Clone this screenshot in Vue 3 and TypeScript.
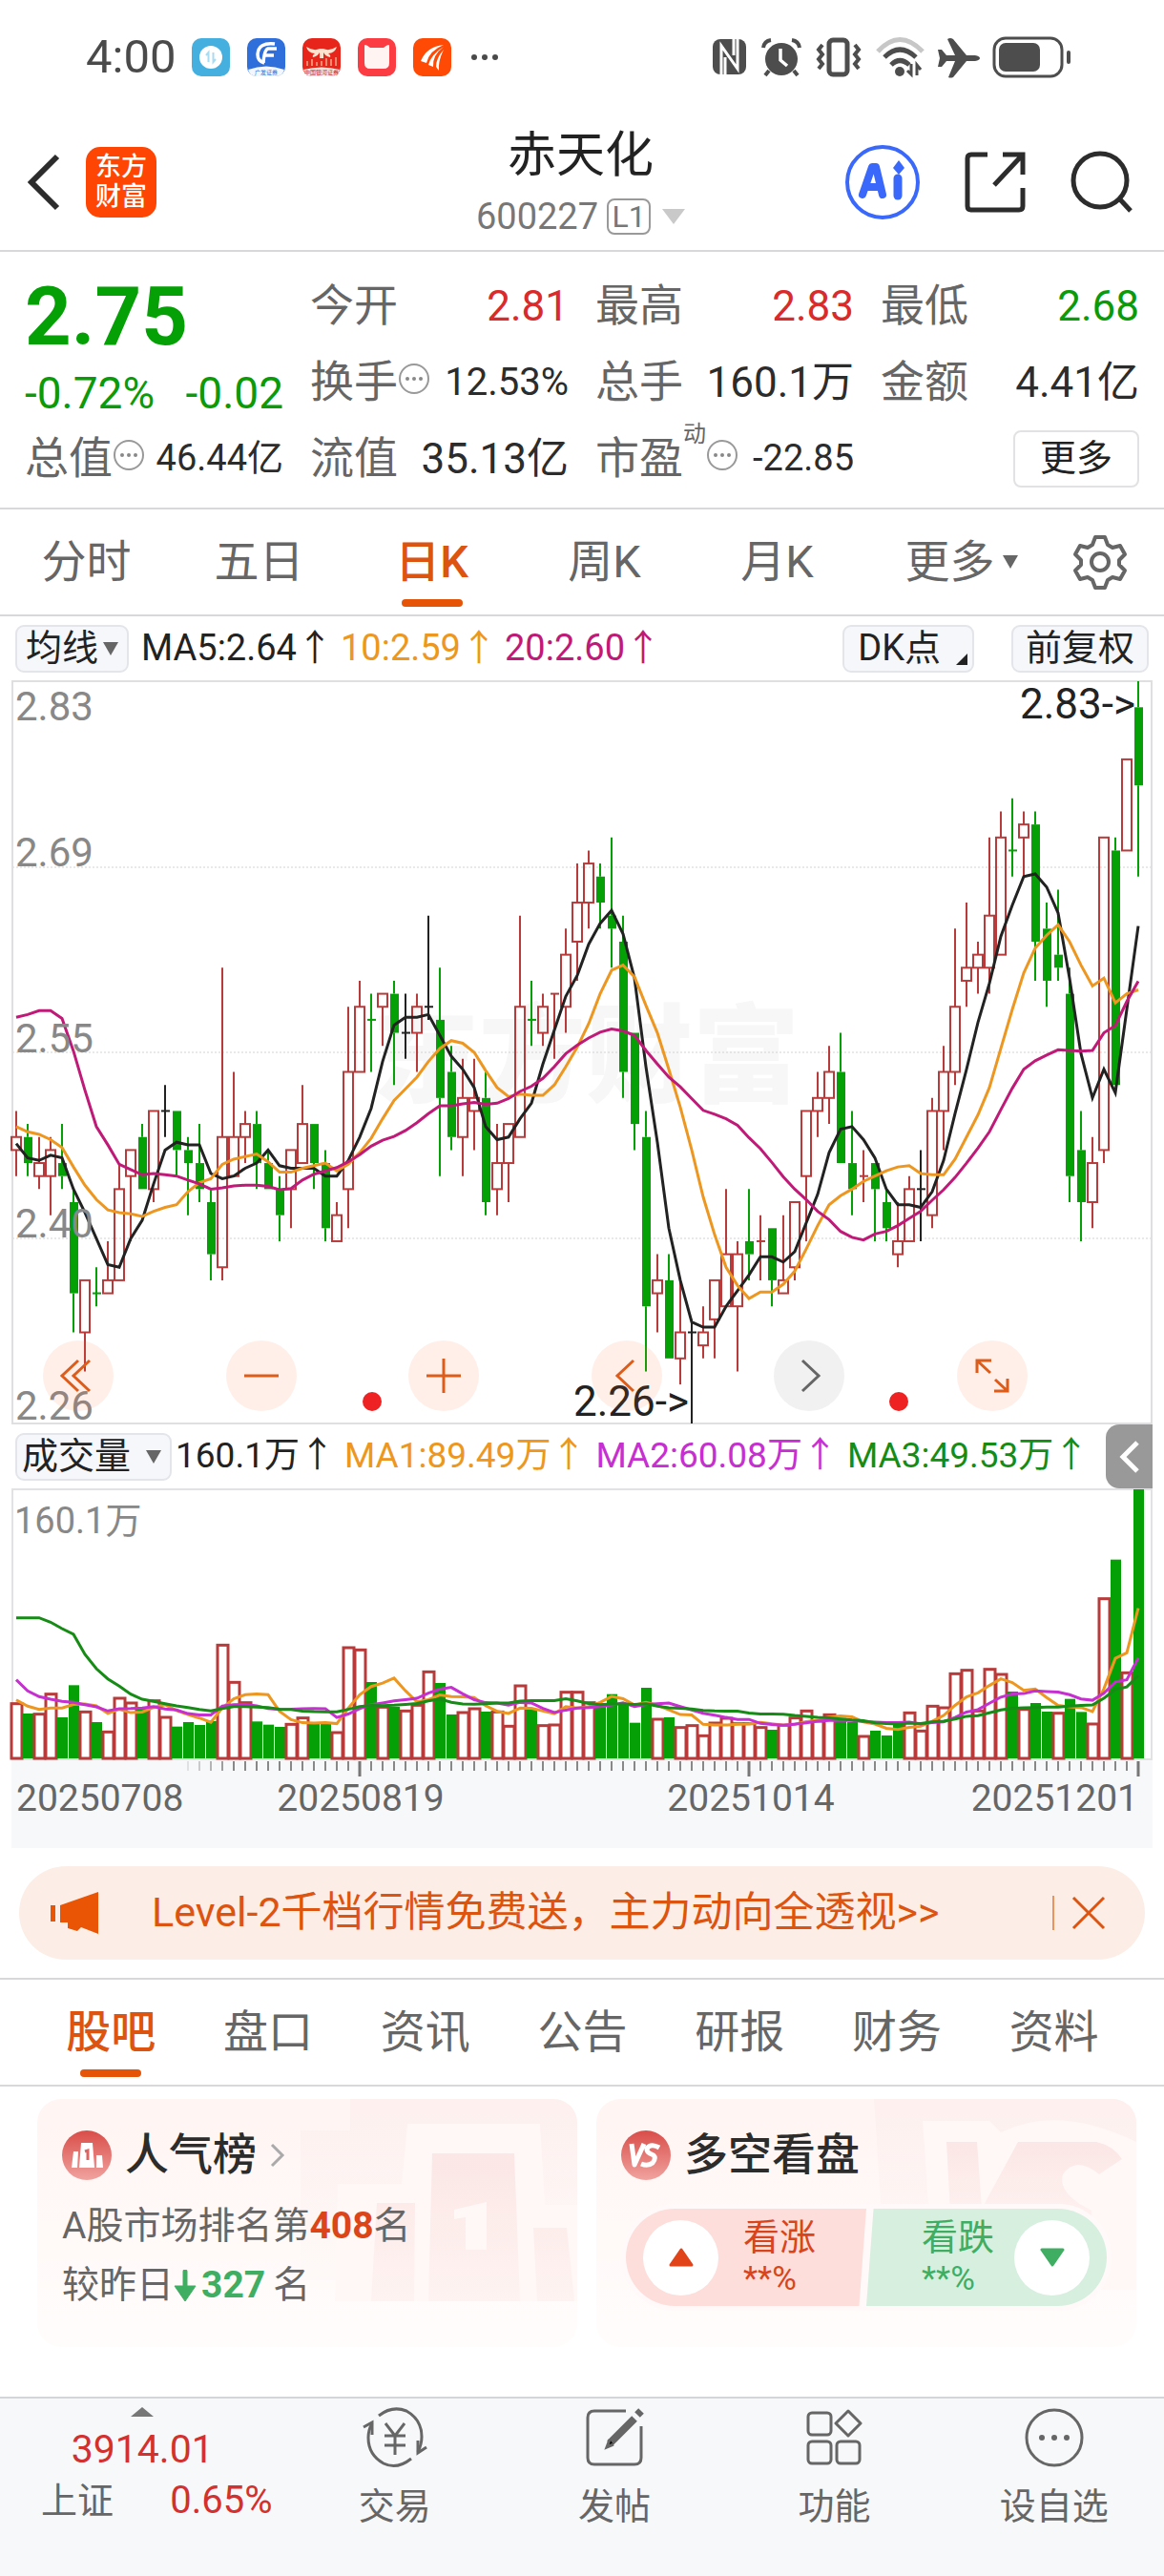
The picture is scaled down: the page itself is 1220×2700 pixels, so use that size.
<script setup lang="ts">
import { computed, ref } from 'vue'

type Kind = 'r' | 'g' | 'k'
interface Candle { kind: Kind; high: number; top: number; bottom: number; low: number; close: number }

// Every level is stored in cents below the 2.83 session peak: kind high top bottom low
const raw = `r 33 35 36 38|g 34 35 37 38|r 35 37 38 39|r 35 36 38 41|g 34 37 38 39|g 39 40 47 50|r 46 46 50 53|g 45 47 47 48|r 43 46 47 47|r 37 39 46 46
|r 36 36 38 43|g 34 35 39 39|r 33 33 39 40|k 31 33 33 35|g 33 33 36 38|g 35 36 37 41|g 34 37 39 40|g 39 40 44 46|r 22 35 45 46|r 30 35 38 38
|r 33 34 35 37|g 33 34 37 39|g 36 37 39 39|g 38 39 41 43|r 36 36 39 42|r 31 34 37 37|g 34 34 37 39|g 36 37 42 43|r 40 41 43 43|r 25 30 39 42
|r 23 25 30 30|g 24 26 26 30|r 24 24 25 28|g 23 24 27 31|k 24 27 27 29|r 24 25 27 30|k 18 25 25 26|g 22 26 32 38|g 28 30 35 36|r 29 32 35 38
|r 29 32 33 36|g 30 32 40 41|r 34 37 39 41|r 34 34 37 40|r 18 25 35 35|g 23 26 26 28|r 24 25 27 28|r 24 24 24 29|r 19 21 25 27|r 14 17 20 23
|r 13 14 17 19|g 14 15 17 19|g 12 18 19 22|g 18 20 30 32|g 27 27 34 36|g 33 35 48 53|r 44 46 47 50|g 44 46 52 52|r 46 50 52 54|k 49 50 50 57
|r 48 50 51 52|r 46 46 49 52|r 39 44 48 48|r 43 44 48 53|g 39 43 44 46|r 41 43 43 46|g 42 42 46 48|r 41 46 47 47|r 40 40 45 46|r 33 33 38 43
|r 30 32 33 35|r 28 30 32 34|g 27 30 37 37|g 33 37 39 41|r 36 38 38 40|g 37 37 39 43|g 39 40 42 43|r 40 43 44 45|r 38 39 43 43|k 36 39 39 43
|r 32 33 41 42|r 28 30 33 36|r 19 25 30 31|r 17 22 23 25|r 20 21 22 24|r 12 18 22 24|r 10 12 21 21|g 9 13 13 15|r 10 11 12 15|g 10 11 20 23
|g 17 19 23 25|g 16 21 22 23|g 22 24 38 40|g 33 36 40 43|r 35 37 40 42|r 12 12 36 37|g 12 13 31 31|r 6 6 13 13|g 0 2 8 15`

const candles: Candle[] = raw.split('|').map((row) => {
  const [kind, ...n] = row.trim().split(' ')
  const [high, top, bottom, low] = n.map(Number)
  return { kind: kind as Kind, high, top, bottom, low, close: kind === 'g' ? bottom : top }
})

const volumes = [
  175, 141, 142, 205, 129, 230, 149, 114, 86, 192, 177, 160, 184, 132, 100, 114, 105, 117, 359, 242,
  178, 116, 106, 99, 110, 130, 111, 111, 84, 351, 344, 240, 164, 162, 152, 170, 275, 237, 138, 147,
  159, 147, 149, 104, 231, 155, 106, 108, 211, 211, 178, 172, 202, 174, 112, 222, 126, 129, 100, 106,
  74, 114, 129, 112, 112, 100, 90, 107, 130, 152, 120, 140, 127, 114, 72, 87, 72, 110, 146, 89,
  167, 162, 269, 280, 152, 283, 267, 210, 157, 174, 147, 145, 187, 146, 111, 505, 625, 272, 846,
]

const cx = (i: number) => 5 + i * 12
const py = (k: number) => 1 + k * 13.65
const vy = (v: number) => 283 - v / 3

// Moving average; `lead` holds the points that depend on days before the window
function average(values: number[], size: number, lead: number[]): number[] {
  return values.map((_, i) =>
    i < lead.length ? lead[i] : values.slice(i - size + 1, i + 1).reduce((a, b) => a + b, 0) / size,
  )
}
const line = (values: number[], y: (v: number) => number) =>
  values.map((v, i) => `${cx(i)},${y(v).toFixed(1)}`).join(' ')

const closes = candles.map((c) => c.close)
const priceLines = [
  { color: '#222', points: line(average(closes, 5, [35.5, 36.6, 36.8, 36.4]), py) },
  { color: '#ed9720', points: line(average(closes, 10, [34.2, 34.6, 34.8, 35.2, 35.8, 37.3, 38.7, 39.8, 40.6]), py) },
  {
    color: '#c01a78',
    points: line(average(closes, 20, [25.8, 25.6, 25.3, 25.3, 25.9, 28.4, 31.4, 34.2, 35.6, 37.1, 37.5, 37.9, 37.8, 37.9, 38, 38.3, 38.6, 39, 38.9]), py),
  },
]
const volumeLines = [
  { color: '#ed9720', points: line(average(volumes, 5, [184, 164, 154, 158]), vy) },
  { color: '#c62fd0', points: line(average(volumes, 10, [247, 212, 194, 186, 179, 176, 169, 162, 149]), vy) },
  {
    color: '#168c16',
    points: line(average(volumes, 20, [442, 442, 442, 428, 408, 390, 327, 282, 250, 227, 202, 186, 179, 172, 165, 160, 154, 149, 157]), vy),
  },
]
const bars = volumes.map((v, i) => ({ x: cx(i), v, up: i === 0 || closes[i] <= closes[i - 1] }))
const ticks = Array.from({ length: 84 }, (_, n) => n + 15)
const majorTicks = [30, 64, 98]
const tone: Record<Kind, string> = { r: '#b83a3a', g: '#05a005', k: '#222' }

const axis = [
  { label: '2.83', y: 42 },
  { label: '2.69', y: 195 },
  { label: '2.55', y: 390 },
  { label: '2.40', y: 584 },
  { label: '2.26', y: 775 },
]

const periods = ['分时', '五日', '日K', '周K', '月K', '更多']
const period = ref('日K')
const sections = ['股吧', '盘口', '资讯', '公告', '研报', '财务', '资料']
const section = ref('股吧')
const bannerOpen = ref(true)

const stats = computed(() => [
  { label: '今开', value: '2.81', tone: 'up' },
  { label: '最高', value: '2.83', tone: 'up' },
  { label: '最低', value: '2.68', tone: 'down' },
  { label: '换手', value: '12.53%', info: true, size: 'mid' },
  { label: '总手', value: '160.1万' },
  { label: '金额', value: '4.41亿' },
])
</script>

<template>
  <div class="page">
    <div class="status">
      <span class="clock">4:00</span>
      <div class="apps">
        <svg viewBox="0 0 40 40"><rect width="40" height="40" rx="10" fill="#45b0e0" /><circle cx="20" cy="20" r="12" fill="#fff" /><path d="M17.500 25V15l-2.500 3M22.500 15v10l2.500-3" fill="none" stroke="#a9dcf2" stroke-width="2" /></svg>
        <svg viewBox="0 0 40 40"><rect width="40" height="40" rx="10" fill="#2f6fdc" /><path d="M1 33Q20 26 39 33Q37 40 30 40H10Q3 40 1 33" fill="#f3f6fc" /><path d="M29 6Q12 4 11 17Q11 24 18 26M31 11H22Q18 12 17 26M18 18h10" fill="none" stroke="#fff" stroke-width="3.500" /><text x="20" y="38" text-anchor="middle" class="tiny" fill="#2f6fdc">广发证券</text></svg>
        <svg viewBox="0 0 40 40"><rect width="40" height="40" rx="10" fill="#e8251b" /><path d="M1 33Q20 28 39 33Q37 40 30 40H10Q3 40 1 33" fill="#fbe9e2" /><path d="M4 9q8 5 14 2h4q6 3 14-2q-2 7-9 7q3 2 2 4q-5-1-7-5v6h-4v-6q-2 4-7 5q-1-2 2-4Q6 16 4 9" fill="#fbe3cf" /><path d="M5 29v-5M10 29v-7M15 29v-4M20 29v-5M25 29v-8M30 29v-7M35 29v-9" stroke="#f28a70" stroke-width="2" /><text x="20" y="38" text-anchor="middle" class="tiny" fill="#c3271e">中国银河证券</text></svg>
        <svg viewBox="0 0 40 40"><rect width="40" height="40" rx="10" fill="#fb3c42" /><path d="M7 8q0-3 6 2h14q6-5 6-2v18q0 6-6 6H13q-6 0-6-6z" fill="#fff4f2" /></svg>
        <svg viewBox="0 0 40 40"><rect width="40" height="40" rx="10" fill="#fe4a05" /><path d="M32 7Q14 9 8 24l6 2Q17 13 32 7M32 9Q19 17 16 28l5 2Q20 18 32 9M32 12q-8 9-8 18l3 4q-1-10 5-22" fill="#fff" /></svg>
      </div>
      <svg class="dots" viewBox="0 0 30 8"><circle cx="4" cy="4" r="3" /><circle cx="15" cy="4" r="3" /><circle cx="26" cy="4" r="3" /></svg>
      <svg class="signals" viewBox="0 0 378 44">
        <rect x="1" y="3" width="35" height="37" rx="8" fill="#4d4d4d" />
        <path d="M10 40V10l17 24V3M14 40V22M23 3v17" fill="none" stroke="#fff" stroke-width="3" />
        <circle cx="73" cy="24" r="17" fill="#4d4d4d" /><path d="M72 13v12l7 6" fill="none" stroke="#fff" stroke-width="3.500" /><path d="M54 12q1-7 8-8M92 12q-1-7-8-8M60 36l-4 5M86 36l4 5" fill="none" stroke="#4d4d4d" stroke-width="4" />
        <rect x="123" y="4" width="19" height="36" rx="4" fill="none" stroke="#4d4d4d" stroke-width="5" /><path d="M116 9l-4 5 4 5-4 5 4 5-4 5M150 9l4 5-4 5 4 5-4 5 4 5" fill="none" stroke="#4d4d4d" stroke-width="4" />
        <path d="M174 16Q197-9 221 16" fill="none" stroke="#c7c7c7" stroke-width="5" /><path d="M181 22q16-16 33 0M188 30q9-9 19 0" fill="none" stroke="#4d4d4d" stroke-width="5" /><circle cx="197" cy="37" r="5" fill="#4d4d4d" /><path d="M209 29v11l-4-4M215 41v-11l4 5" fill="none" stroke="#4d4d4d" stroke-width="3" />
        <path d="M237 14h4l5 6h9L247 3q3-2 6 0l14 17h9q5 1 5 3q0 2-5 3h-9L253 43q-3 1-5 0l7-17h-9l-5 6h-4l2-9z" fill="#4d4d4d" />
        <rect x="296" y="2" width="71" height="40" rx="12" fill="none" stroke="#4d4d4d" stroke-width="3" /><rect x="301" y="7" width="43" height="30" rx="7" fill="#4d4d4d" /><path d="M374 17v10" stroke="#4d4d4d" stroke-width="4" stroke-linecap="round" />
      </svg>
    </div>

    <header class="head">
      <div class="head-left">
        <button class="plain" aria-label="返回"><svg width="36" height="62" viewBox="0 0 36 62"><path d="M32 4L5 31l27 27" fill="none" stroke="#2c2c2c" stroke-width="6" /></svg></button>
        <div class="brand"><span>东方</span><span>财富</span></div>
      </div>
      <div class="title">
        <h1>赤天化</h1>
        <div class="code"><span>600227</span><span class="level">L1</span><svg width="24" height="16" viewBox="0 0 24 16"><path d="M0 0h24L12 16z" fill="#c9c9c9" /></svg></div>
      </div>
      <div class="head-right">
        <button class="plain" aria-label="AI"><svg width="80" height="80" viewBox="0 0 80 80"><circle cx="40" cy="40" r="37" fill="none" stroke="#3a68fb" stroke-width="4" /><path d="M19 53l10-29h4l7 29M23 45h15" fill="none" stroke="#3a68fb" stroke-width="8" stroke-linejoin="round" stroke-linecap="round" /><path d="M56 36v18" stroke="#3a68fb" stroke-width="9" stroke-linecap="round" /><path d="M57 17l6 8-6 7-6-7z" fill="#3a68fb" /></svg></button>
        <button class="plain" aria-label="分享"><svg width="66" height="66" viewBox="0 0 66 66"><path d="M25 4H8q-4 0-4 4v50q0 4 4 4h50q4 0 4-4V39M41 4h21v21M62 4L32 36" fill="none" stroke="#2c2c2c" stroke-width="5" /></svg></button>
        <button class="plain" aria-label="搜索"><svg width="68" height="66" viewBox="0 0 68 66"><circle cx="32" cy="31" r="28" fill="none" stroke="#2c2c2c" stroke-width="5" /><path d="M52 50l12 13" stroke="#2c2c2c" stroke-width="5" /></svg></button>
      </div>
    </header>

    <section class="quote">
      <div class="price">
        <strong>2.75</strong>
        <div class="change"><span>-0.72%</span><span>-0.02</span></div>
      </div>
      <div v-for="s in stats" :key="s.label" class="stat">
        <span>{{ s.label }}</span>
        <svg v-if="s.info" class="info" viewBox="0 0 34 34"><circle cx="17" cy="17" r="15" fill="none" stroke="#999" stroke-width="2" /><g fill="#888"><circle cx="10" cy="17" r="2" /><circle cx="17" cy="17" r="2" /><circle cx="24" cy="17" r="2" /></g></svg>
        <b :class="[s.tone, s.size]">{{ s.value }}</b>
      </div>
      <div class="stat">
        <span>总值</span>
        <svg class="info" viewBox="0 0 34 34"><circle cx="17" cy="17" r="15" fill="none" stroke="#999" stroke-width="2" /><g fill="#888"><circle cx="10" cy="17" r="2" /><circle cx="17" cy="17" r="2" /><circle cx="24" cy="17" r="2" /></g></svg>
        <b class="small">46.44亿</b>
      </div>
      <div class="stat"><span>流值</span><b>35.13亿</b></div>
      <div class="stat">
        <span>市盈</span><sup>动</sup>
        <svg class="info" viewBox="0 0 34 34"><circle cx="17" cy="17" r="15" fill="none" stroke="#999" stroke-width="2" /><g fill="#888"><circle cx="10" cy="17" r="2" /><circle cx="17" cy="17" r="2" /><circle cx="24" cy="17" r="2" /></g></svg>
        <b class="small">-22.85</b>
      </div>
      <div class="stat end"><button class="more">更多</button></div>
    </section>

    <nav class="periods">
      <button v-for="p in periods" :key="p" class="tab" :class="{ on: p === period, menu: p === '更多' }" @click="period = p">
        {{ p }}<svg v-if="p === '更多'" class="caret" viewBox="0 0 16 14"><path d="M0 0h16L8 14z" fill="#666" /></svg>
      </button>
      <button class="plain gear" aria-label="设置">
        <svg width="58" height="58" viewBox="0 0 58 58"><path d="M24 3h10l3 8 5 3 8-2 5 9-6 6v5l6 6-5 9-8-2-5 3-3 8H24l-3-8-5-3-8 2-5-9 6-6v-5l-6-6 5-9 8 2 5-3z" fill="none" stroke="#666" stroke-width="4" stroke-linejoin="round" /><circle cx="29" cy="29" r="9" fill="none" stroke="#666" stroke-width="4" /></svg>
      </button>
    </nav>

    <div class="bar">
      <button class="chip">均线<svg class="caret" viewBox="0 0 16 14"><path d="M0 0h16L8 14z" fill="#666" /></svg></button>
      <div class="legend"><span>MA5:2.64↑</span><span class="orange">10:2.59↑</span><span class="pink">20:2.60↑</span></div>
      <div class="chips">
        <button class="chip dk">DK点<svg class="corner" viewBox="0 0 12 12"><path d="M12 0v12H0z" fill="#222" /></svg></button>
        <button class="chip">前复权</button>
      </div>
    </div>

    <div class="chart">
      <svg viewBox="0 0 1196 780" role="img" aria-label="日K线图">
        <g class="mark" fill="#f7f7f7"><text x="378" y="434">东方财富</text></g>
        <path d="M1 196H1196M1 390H1196M1 585H1196" stroke="#d2d2d2" stroke-dasharray="2 2" />
        <rect x="1" y="1" width="1194" height="778" fill="none" stroke="#dfdfe1" stroke-width="2" />
        <g v-for="(c, i) in candles" :key="i" :stroke="tone[c.kind]">
          <path :d="`M${cx(i)} ${py(c.high)}V${py(c.top)}M${cx(i)} ${py(c.bottom)}V${py(c.low)}`" stroke-width="2" />
          <path v-if="c.top === c.bottom" :d="`M${cx(i) - 4} ${py(c.top)}h9`" stroke-width="2" />
          <rect v-else-if="c.kind === 'r'" :x="cx(i) - 5" :y="py(c.top)" width="10" :height="py(c.bottom) - py(c.top)" fill="none" stroke-width="2" />
          <rect v-else :x="cx(i) - 4" :y="py(c.top)" width="9" :height="py(c.bottom) - py(c.top)" :fill="tone.g" stroke="none" />
        </g>
        <polyline v-for="l in priceLines" :key="l.color" :points="l.points" fill="none" :stroke="l.color" stroke-width="3" />
        <g class="axis"><text v-for="a in axis" :key="a.label" x="4" :y="a.y">{{ a.label }}</text></g>
        <circle cx="378" cy="756" r="10" fill="#ee2222" /><circle cx="930" cy="756" r="10" fill="#ee2222" />
        <text class="peak" x="1178" y="40" text-anchor="end">2.83-&gt;</text>
        <text class="peak" x="710" y="771" text-anchor="end">2.26-&gt;</text>
      </svg>
      <div class="controls">
        <button aria-label="最早"><svg viewBox="0 0 74 74"><path d="M37 21L20 37l17 16M49 21L32 37l17 16" /></svg></button>
        <button aria-label="缩小"><svg viewBox="0 0 74 74"><path d="M19 37h36" /></svg></button>
        <button aria-label="放大"><svg viewBox="0 0 74 74"><path d="M19 37h36M37 19v36" /></svg></button>
        <button aria-label="左移"><svg viewBox="0 0 74 74"><path d="M44 21L27 37l17 16" /></svg></button>
        <button aria-label="右移" class="off"><svg viewBox="0 0 74 74"><path d="M30 21l17 16-17 16" /></svg></button>
        <button aria-label="全屏"><svg viewBox="0 0 74 74"><path d="M21 34V21h15M21 21l14 13M53 40v13H39M53 53L40 41" /></svg></button>
      </div>
    </div>

    <div class="bar volume-bar">
      <button class="chip wide">成交量<svg class="caret" viewBox="0 0 16 14"><path d="M0 0h16L8 14z" fill="#666" /></svg></button>
      <div class="legend tight"><span>160.1万↑</span><span class="orange">MA1:89.49万↑</span><span class="violet">MA2:60.08万↑</span><span class="green">MA3:49.53万↑</span></div>
      <button class="drawer" aria-label="展开"><svg width="22" height="36" viewBox="0 0 22 36"><path d="M19 3L4 18l15 15" fill="none" stroke="#fff" stroke-width="5" /></svg></button>
    </div>

    <div class="chart">
      <svg viewBox="0 0 1196 377" role="img" aria-label="成交量图">
        <rect y="285" width="1196" height="92" fill="#f7f8fa" />
        <rect x="1" y="1" width="1194" height="283" fill="none" stroke="#e2e2e4" stroke-width="2" />
        <template v-for="b in bars" :key="b.x">
          <rect v-if="b.up" :x="b.x - 5" :y="vy(b.v) + 1" width="11" :height="b.v / 3 - 1" fill="#fff" stroke="#b83a3a" stroke-width="3" />
          <rect v-else :x="b.x - 5" :y="vy(b.v)" width="11" :height="b.v / 3" fill="#05a005" />
        </template>
        <polyline v-for="l in volumeLines" :key="l.color" :points="l.points" fill="none" :stroke="l.color" stroke-width="3" />
        <path v-for="t in ticks" :key="t" :d="`M${cx(t)} 286v10`" stroke="#888" :opacity="Math.min(1, (t - 14) / 5)" stroke-width="2" />
        <path v-for="t in majorTicks" :key="t" :d="`M${cx(t)} 286v16`" stroke="#777" stroke-width="3" />
        <text class="vol" x="3" y="47">160.1万</text>
        <g class="dates"><text x="5" y="338">20250708</text><text x="366" y="338" text-anchor="middle">20250819</text><text x="775" y="338" text-anchor="middle">20251014</text><text x="1181" y="338" text-anchor="end">20251201</text></g>
      </svg>
    </div>

    <div v-if="bannerOpen" class="banner">
      <svg width="50" height="44" viewBox="0 0 50 44"><path d="M0 14h5v17H0zM10 14L50 0v44l-18-7-4 4-10-3V32H10z" fill="#e95505" /></svg>
      <a href="#">Level-2千档行情免费送，主力动向全透视&gt;&gt;</a>
      <button class="plain close" aria-label="关闭" @click="bannerOpen = false"><svg width="36" height="36" viewBox="0 0 36 36"><path d="M2 2l32 32M34 2L2 34" stroke="#dd5410" stroke-width="3" /></svg></button>
    </div>

    <nav class="sections">
      <button v-for="s in sections" :key="s" class="tab" :class="{ on: s === section }" @click="section = s">{{ s }}</button>
    </nav>

    <div class="cards">
      <article class="card">
        <svg class="art" viewBox="0 0 566 260" preserveAspectRatio="xMaxYMin slice">
          <defs>
            <linearGradient id="halo" x1="0" y1="0" x2="0" y2="1"><stop offset="0" stop-color="#fdf0ee" /><stop offset="1" stop-color="#fef9f8" /></linearGradient>
            <linearGradient id="podium" x1="0" y1="0" x2="0" y2="1"><stop offset="0" stop-color="#fbe7e5" /><stop offset="1" stop-color="#fef3f1" /></linearGradient>
          </defs>
          <path d="M276 190V33h52V0h238v190z" fill="url(#halo)" />
          <path d="M312 212l3-123h67l6-63h139l5 85h34v101z" fill="#fff8f6" />
          <path d="M356 109h40l-1 103h-45zM414 57h86l6 155h-96zM520 135h35l8 77h-39z" fill="url(#podium)" />
          <path d="M437 116l34-8v50h-22v-34l-12 2z" fill="#fff8f6" />
        </svg>
        <div class="card-title">
          <svg width="52" height="52" viewBox="0 0 52 52"><defs><linearGradient id="badge" x1="0" y1="0" x2="0" y2="1"><stop offset="0" stop-color="#d94d49" /><stop offset="1" stop-color="#f0a39f" /></linearGradient></defs><circle cx="26" cy="26" r="26" fill="url(#badge)" /><path d="M12 22h5l-1 17h-6zM20 13h12l2 26H18zM36 26h6l1 13h-7z" fill="#fff" /><path d="M24 22l3-1v10" fill="none" stroke="#dd6461" stroke-width="3" /></svg>
          <h2>人气榜</h2>
          <svg width="16" height="26" viewBox="0 0 16 26"><path d="M2 2l11 11L2 24" fill="none" stroke="#aaa" stroke-width="3" /></svg>
        </div>
        <p>A股市场排名第<b class="rank">408</b>名</p>
        <p>较昨日<svg class="fall" viewBox="0 0 24 34"><path d="M12 2v20" stroke="#3fae62" stroke-width="5" stroke-linecap="round" /><path d="M1 17h22L12 33z" fill="#3fae62" stroke="#3fae62" stroke-linejoin="round" /></svg><b class="drop">327</b>名</p>
      </article>
      <article class="card">
        <svg class="art" viewBox="0 0 566 260" preserveAspectRatio="xMaxYMin slice">
          <path d="M291 0h275v200H304z" fill="url(#halo)" />
          <path d="M342 23h70l12 12q60-30 142 10v155H354z" fill="#fff8f6" />
          <path d="M367 45h32l5 70 38-70h82q18 4 27 18l-24 16q-24-20-38 0-6 20 30 38v20H412l28-42-14 42h-54z" fill="url(#podium)" />
        </svg>
        <div class="card-title">
          <svg width="52" height="52" viewBox="0 0 52 52"><circle cx="26" cy="26" r="26" fill="url(#badge)" /><path d="M11 14l3 22 10-22M40 18q-9-5-13 1-1 4 7 7 3 3-1 8-5 4-12 1" fill="none" stroke="#fff" stroke-width="5" stroke-linejoin="round" /></svg>
          <h2>多空看盘</h2>
        </div>
        <div class="votes">
          <button class="vote bull"><i><svg width="26" height="20" viewBox="0 0 26 20"><path d="M13 2l11 16H2z" fill="#e04418" stroke="#e04418" stroke-width="3" stroke-linejoin="round" /></svg></i><span>看涨<br /><em>**%</em></span></button>
          <button class="vote bear"><span>看跌<br /><em>**%</em></span><i><svg width="26" height="20" viewBox="0 0 26 20"><path d="M13 18L2 2h22z" fill="#3fae62" stroke="#3fae62" stroke-width="3" stroke-linejoin="round" /></svg></i></button>
        </div>
      </article>
    </div>

    <footer class="dock">
      <div class="index">
        <svg width="24" height="10" viewBox="0 0 24 10"><path d="M12 0l12 10H0z" fill="#777" /></svg>
        <b>3914.01</b>
        <div><span>上证</span><em>0.65%</em></div>
      </div>
      <button class="dock-item"><svg viewBox="0 0 72 64"><path d="M19 9Q33-2 48 4 64 13 64 31q0 8-4 16M53 54Q38 66 24 59 8 50 8 32q0-8 4-15" fill="none" /><path d="M69 42l-9 6V35M3 21l9-5v13" fill="none" /><path d="M26 17l10 13 10-13M36 30v20M25 30h22M25 40h22" fill="none" /></svg>交易</button>
      <button class="dock-item"><svg viewBox="0 0 72 64"><path d="M48 4H15q-7 0-7 7v42q0 7 7 7h42q7 0 7-7V20" fill="none" /><path d="M57 12L31 38" stroke-width="8" /><path d="M60 8l4-4" stroke-width="8" /><path d="M31 34l-3 8 7-3" /></svg>发帖</button>
      <button class="dock-item"><svg viewBox="0 0 72 64"><rect x="9" y="6" width="24" height="23" rx="4" fill="none" /><rect x="9" y="36" width="24" height="23" rx="4" fill="none" /><rect x="39" y="36" width="24" height="23" rx="4" fill="none" /><path d="M51 4l13 13-13 13-13-13z" fill="none" stroke-linejoin="round" /></svg>功能</button>
      <button class="dock-item"><svg viewBox="0 0 72 64"><circle cx="36" cy="32" r="29" fill="none" /><g fill="#666" stroke="none"><circle cx="23" cy="32" r="3" /><circle cx="36" cy="32" r="3" /><circle cx="49" cy="32" r="3" /></g></svg>设自选</button>
    </footer>
  </div>
</template>

<style>
body { background: #fff; }
</style>

<style scoped>
* { box-sizing: border-box; }
.page { font-family: Roboto, "Noto Sans CJK SC", sans-serif; color: #222; font-size: 38px; line-height: 1.2; }
svg { display: block; flex: none; }
button { font: inherit; color: inherit; background: none; border: 0; padding: 0; margin: 0; cursor: pointer; }
b, em, i { font-weight: 400; font-style: normal; }
h1, h2, p { margin: 0; font-weight: 400; }

.status { display: flex; align-items: center; height: 120px; padding: 0 96px 0 90px; }
.clock { font-size: 49px; color: #4a4a4a; margin-right: 17px; }
.apps { display: flex; gap: 18px; }
.apps svg { width: 40px; height: 40px; }
.tiny { font-size: 6px; }
.dots { width: 30px; height: 8px; margin-left: 20px; fill: #4a4a4a; }
.signals { width: 378px; height: 44px; margin-left: auto; }

.head { display: grid; grid-template-columns: 1fr auto 1fr; align-items: center; height: 144px; padding: 0 31px 0 28px; border-bottom: 2px solid #d8d8da; }
.head-left { display: flex; align-items: center; gap: 26px; }
.brand { display: flex; flex-direction: column; align-items: center; justify-content: center; width: 74px; height: 74px; border-radius: 15px; background: #ff4503; color: #fff; font-size: 27px; line-height: 31px; font-weight: 500; }
.title { text-align: center; }
h1 { font-size: 51px; line-height: 62px; }
.code { display: flex; align-items: center; justify-content: center; font-size: 38px; line-height: 46px; color: #777; padding-top: 10px; }
.level { border: 2px solid #999; border-radius: 8px; font-size: 32px; line-height: 34px; width: 46px; margin: 0 12px 0 9px; }
.head-right { display: flex; align-items: center; justify-content: flex-end; gap: 45px; }

.quote { display: grid; grid-template-columns: repeat(4, 1fr); grid-auto-rows: 80px; column-gap: 28px; padding: 17px 26px 11px; border-bottom: 2px solid #d8d8da; }
.price { grid-row: span 2; color: #0a9a0a; }
.price strong { display: block; font-size: 85px; line-height: 102px; font-weight: 700; color: #05a005; }
.change { display: flex; justify-content: space-between; font-size: 46px; line-height: 58px; }
.stat { display: flex; align-items: center; color: #666; font-size: 46px; white-space: nowrap; }
.stat b { margin-left: auto; color: #2c2c2c; font-size: 44px; }
.stat b.mid { font-size: 40px; }
.stat b.small { font-size: 38px; }
.stat b.up { color: #d92b2b; }
.stat b.down { color: #0a9a0a; }
.stat sup { font-size: 24px; line-height: 28px; align-self: flex-start; }
.info { width: 34px; height: 34px; }
.stat .info { margin-bottom: 8px; }
.end { justify-content: flex-end; }
.more { width: 132px; height: 60px; border: 2px solid #e2e2e4; border-radius: 8px; font-size: 38px; color: #222; }

.periods { display: grid; grid-template-columns: repeat(6, 181fr) 134fr; height: 112px; border-bottom: 2px solid #d8d8da; }
.tab { position: relative; display: flex; align-items: center; justify-content: center; font-size: 47px; color: #666; }
.tab.menu { padding-left: 24px; }
.tab.on { color: #dd5410; font-weight: 500; }
.tab.on::after { content: ""; position: absolute; left: 50%; bottom: 8px; width: 64px; height: 8px; margin-left: -32px; border-radius: 4px; background: #e65507; }
.caret { width: 16px; height: 14px; }
.tab .caret { margin-left: 8px; }
.gear { display: flex; align-items: center; justify-content: center; }

.bar { position: relative; display: flex; align-items: center; height: 67px; padding: 0 16px; }
.chip { position: relative; display: flex; align-items: center; justify-content: center; gap: 5px; height: 50px; padding: 0 9px; border: 2px solid #e3e5ea; border-radius: 9px; background: #f6f7fa; font-size: 38px; white-space: nowrap; }
.chip.wide { gap: 16px; padding: 0 9px 0 5px; }
.chip.dk { padding: 0 33px 0 14px; }
.chips { display: flex; gap: 39px; margin-left: auto; }
.chips .chip:last-child { padding: 0 13px; }
.corner { position: absolute; right: 5px; bottom: 6px; width: 12px; height: 12px; }
.legend { display: flex; gap: 8px; margin-left: 13px; font-size: 38px; white-space: nowrap; }
.legend.tight { font-size: 37px; gap: 10px; margin-left: 4px; }
.orange { color: #ed9720; }
.pink { color: #c01a78; }
.violet { color: #c62fd0; }
.green { color: #168c16; }
.drawer { position: absolute; right: 12px; top: 0; width: 49px; height: 67px; border-radius: 14px 0 0 14px; background: #999; display: flex; align-items: center; justify-content: center; }

.chart { position: relative; margin: 0 12px; }
.chart > svg { width: 100%; height: auto; overflow: visible; }
.axis { font-size: 42px; fill: #888; }
.peak { font-size: 44px; fill: #222; }
.mark { font-size: 112px; font-weight: 900; }
.vol { font-size: 38px; fill: #888; }
.dates { font-size: 39px; fill: #666; }
.controls { position: absolute; left: 33px; right: 131px; bottom: 14px; display: flex; justify-content: space-between; }
.controls button { width: 74px; height: 74px; border-radius: 50%; background: rgba(255, 100, 30, 0.1); }
.controls svg { width: 74px; height: 74px; fill: none; stroke: #dd5c1a; stroke-width: 3; }
.controls .off { background: rgba(60, 60, 60, 0.07); }
.controls .off svg { stroke: #666; }

.banner { display: flex; align-items: center; height: 98px; margin: 19px 20px; padding: 0 41px 0 33px; border-radius: 49px; background: #fceee6; }
.banner a { margin-left: 56px; font-size: 43px; color: #dd5410; text-decoration: none; white-space: nowrap; }
.close { margin-left: auto; padding-left: 18px; border-left: 2px solid #e9935f; }

.sections { display: grid; grid-template-columns: repeat(7, 1fr); height: 114px; padding: 0 33px 0 34px; border-top: 2px solid #d8d8da; border-bottom: 2px solid #d8d8da; }
.cards { display: grid; grid-template-columns: 1fr 1fr; gap: 20px; padding: 13px 29px 0 39px; }
.card { position: relative; height: 260px; padding: 32px 26px; border-radius: 25px; overflow: hidden; background: linear-gradient(#fff5f3, #fffdfc); color: #666; }
.art { position: absolute; left: 0; top: 0; width: 100%; height: 100%; }
.card > :not(.art) { position: relative; }
.card-title { display: flex; align-items: center; gap: 14px; height: 54px; margin-bottom: 16px; color: #2c2c2c; }
h2 { font-size: 46px; font-weight: 500; }
.card p { font-size: 39px; line-height: 62px; white-space: nowrap; }
.card p b { font-weight: 700; }
.rank { color: #dc4518; }
.drop { color: #3fae62; margin: 0 8px 0 5px; }
.fall { display: inline-block; width: 24px; height: 34px; vertical-align: -5px; }
.votes { display: grid; grid-template-columns: 1fr 1fr; width: 514px; max-width: 100%; margin-top: 24px; border: 5px solid #fffaf9; border-radius: 56px; overflow: hidden; background: #fffaf9; }
.vote { display: flex; align-items: center; height: 102px; text-align: left; font-size: 38px; line-height: 42px; }
.vote em { font-size: 35px; line-height: 36px; }
.vote i { display: flex; align-items: center; justify-content: center; flex: none; width: 79px; height: 79px; border-radius: 50%; background: #fff; }
.bull { padding-left: 18px; gap: 26px; color: #d8451c; background: #fddedb; clip-path: polygon(0 0, 100% 0, 97% 100%, 0 100%); }
.bear { justify-content: flex-end; padding-right: 18px; gap: 21px; color: #3fae62; background: #d7efdf; clip-path: polygon(3% 0, 100% 0, 100% 100%, 0 100%); }

.dock { display: flex; height: 188px; margin-top: 52px; border-top: 2px solid #d3d5d9; background: #f7f8fa; color: #666; }
.index { flex: 298 1 0; display: flex; flex-direction: column; align-items: center; padding-top: 9px; }
.index b { font-size: 41px; line-height: 52px; margin: 8px 0 2px; color: #d33030; }
.index div { display: flex; justify-content: space-between; width: 100%; padding: 0 13px 0 43px; line-height: 52px; }
.index em { font-size: 40px; color: #d33030; }
.dock-item { flex: 230 1 0; display: flex; flex-direction: column; align-items: center; gap: 18px; padding-top: 9px; font-size: 38px; }
.dock-item svg { width: 72px; height: 64px; stroke: #666; stroke-width: 3; }
</style>
